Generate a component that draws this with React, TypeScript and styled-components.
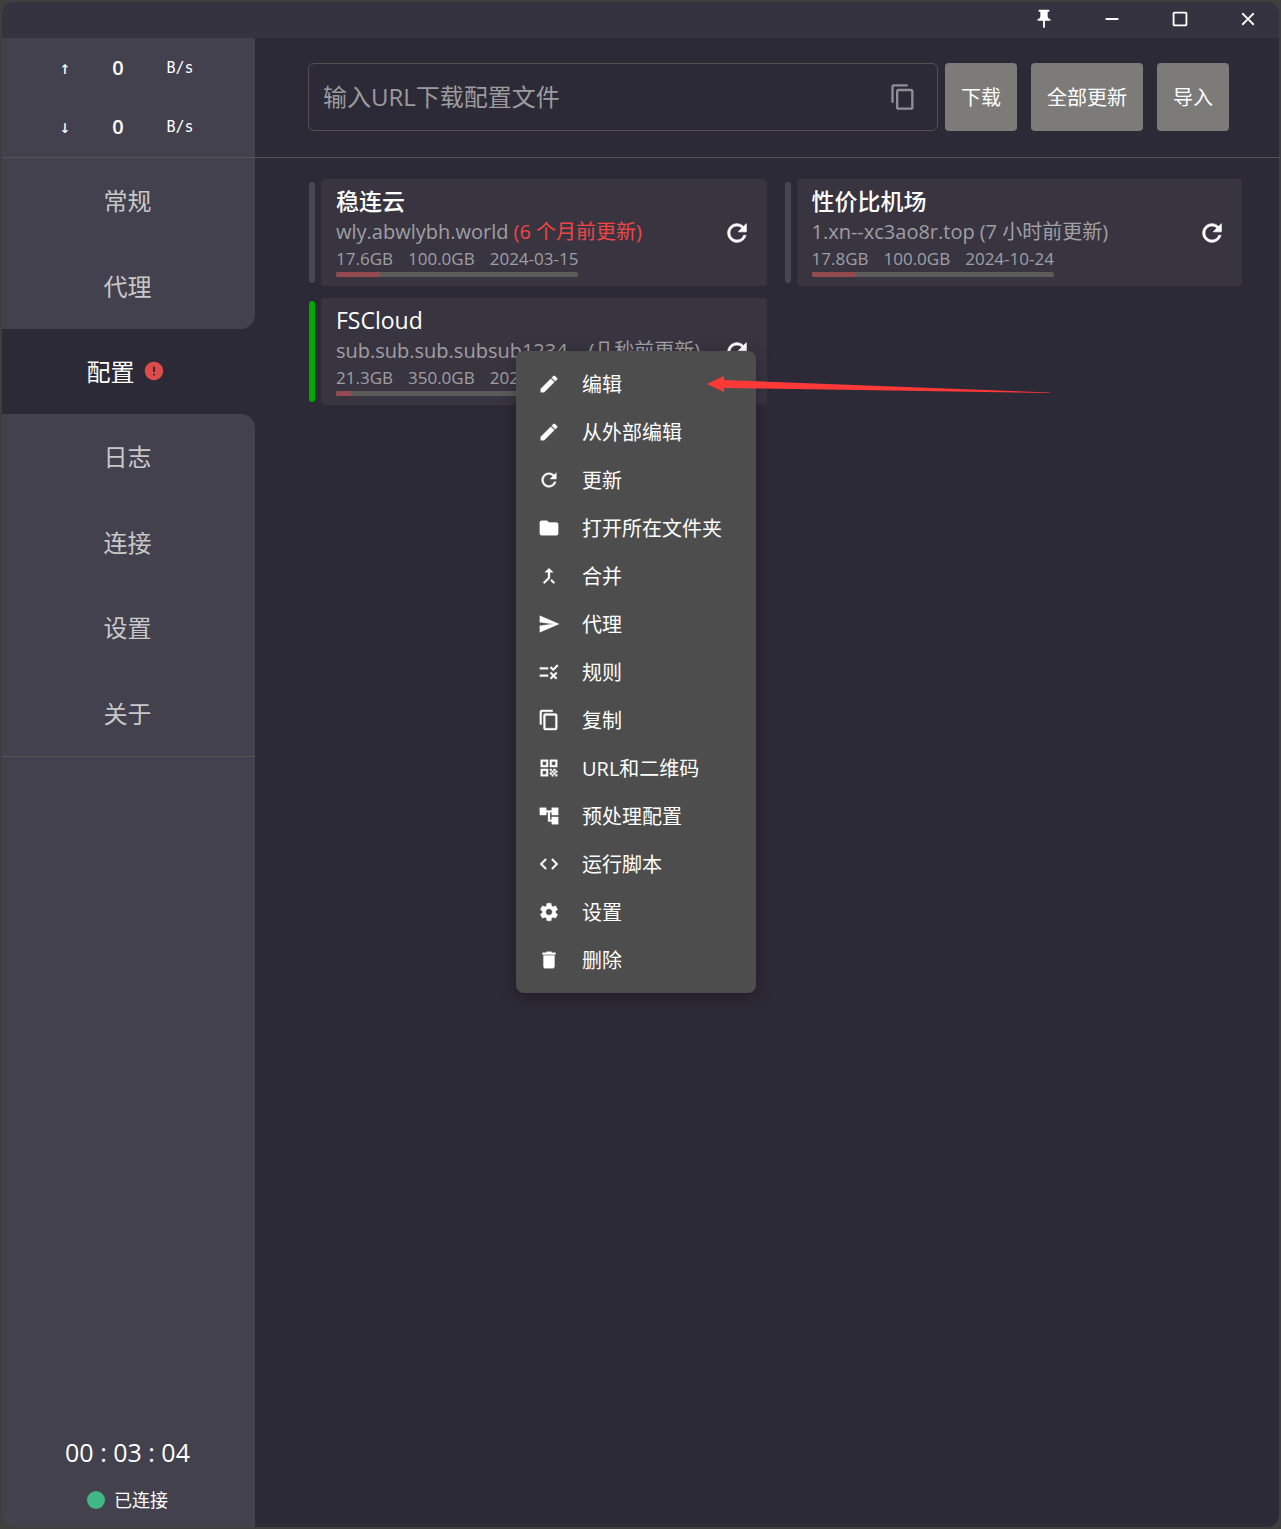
import React, { useState } from "react";
import styled, { createGlobalStyle } from "styled-components";
import type { IconType } from "react-icons";
import {
  MdAccountTree,
  MdCallMerge,
  MdClose,
  MdCode,
  MdContentCopy,
  MdCropSquare,
  MdDelete,
  MdEdit,
  MdError,
  MdFolder,
  MdPushPin,
  MdQrCode,
  MdRefresh,
  MdRemove,
  MdRule,
  MdSend,
  MdSettings,
} from "react-icons/md";

const GlobalStyle = createGlobalStyle`
  * { box-sizing: border-box; }
  body {
    margin: 0;
    background: #3f3f3e;
    color: #fff;
    font-family: "Open Sans", "Noto Sans CJK SC", sans-serif;
  }
  button, input { font: inherit; color: inherit; }
  button { border: 0; padding: 0; background: none; cursor: pointer; }
  a { color: inherit; text-decoration: none; }
`;

const Screen = styled.div`
  position: relative;
  min-height: 100vh;
  padding: 2px;
  display: flex;
`;

const Window = styled.div`
  flex: 1;
  min-width: 0;
  display: flex;
  flex-direction: column;
  border-radius: 12px;
  overflow: hidden;
  background: #2d2a37;
`;

const TitleBar = styled.header`
  display: flex;
  justify-content: flex-end;
  gap: 6px;
  height: 36px;
  background: #363341;
`;

const WindowButton = styled.button`
  display: flex;
  align-items: center;
  justify-content: center;
  width: 62px;
  height: 33px;
`;

const Body = styled.div`
  flex: 1;
  display: flex;
`;

const Sidebar = styled.aside`
  flex: none;
  width: 253px;
  display: flex;
  flex-direction: column;
`;

const Traffic = styled.div`
  height: 120px;
  background: #43414d;
  border-bottom: 1px solid #565454;
`;

const TrafficRow = styled.div`
  display: grid;
  grid-template-columns: 52px 54px 70px;
  justify-content: center;
  align-items: center;
  justify-items: center;
  height: 59px;
  padding-right: 3px;
  font-size: 20px;
  font-weight: 600;
`;

const Mono = styled.span<{ $size: number }>`
  font-family: "DejaVu Sans Mono", monospace;
  font-size: ${(p) => p.$size}px;
  font-weight: 400;
`;

const Nav = styled.nav`
  display: grid;
  grid-template-rows: repeat(7, 1fr);
  height: 598px;
  background: #2d2a37;
`;

const NavLink = styled.a<{ $active?: boolean; $edge?: "above" | "below" }>`
  display: flex;
  align-items: center;
  justify-content: center;
  gap: 8px;
  padding: 0 2px 2px 0;
  font-size: 24px;
  color: ${(p) => (p.$active ? "#fff" : "#c9c8c9")};
  background: ${(p) => (p.$active ? "#2d2a37" : "#43414d")};
  border-bottom-right-radius: ${(p) => (p.$edge === "above" ? "14px" : "0")};
  border-top-right-radius: ${(p) => (p.$edge === "below" ? "14px" : "0")};
  svg {
    margin-right: 4px;
    color: #dd4b4b;
  }
`;

const Status = styled.div`
  flex: 1;
  display: flex;
  flex-direction: column;
  align-items: center;
  justify-content: flex-end;
  gap: 18px;
  padding: 0 2px 13px 0;
  background: #43414d;
  border-top: 1px solid #565454;
`;

const Clock = styled.time`
  font-size: 25px;
  line-height: 32px;
`;

const Connection = styled.div`
  display: flex;
  align-items: center;
  gap: 9px;
  font-size: 18px;
  line-height: 28px;
`;

const Dot = styled.span`
  width: 18px;
  height: 18px;
  border-radius: 50%;
  background: #41b883;
`;

const Main = styled.main`
  flex: 1;
  min-width: 0;
`;

const Toolbar = styled.form`
  display: flex;
  align-items: center;
  gap: 14px;
  height: 120px;
  padding: 0 50px 2px 53px;
  border-bottom: 1px solid #565454;
`;

const UrlBox = styled.label`
  flex: 1;
  min-width: 0;
  display: flex;
  align-items: center;
  height: 68px;
  margin-right: -7px;
  padding: 0 20px 0 14px;
  border: 1px solid #55504f;
  border-radius: 6px;
`;

const UrlInput = styled.input`
  flex: 1;
  min-width: 0;
  padding: 0;
  border: 0;
  outline: 0;
  background: none;
  font-size: 24px;
  &::placeholder { color: #9c9b9d; opacity: 1; }
`;

const CopyButton = styled.button`
  display: flex;
  color: #8f8e99;
`;

const ActionButton = styled.button`
  height: 68px;
  padding: 0 16px;
  border-radius: 4px;
  background: #7c7b78;
  font-size: 20px;
  white-space: nowrap;
`;

const Profiles = styled.section`
  display: grid;
  grid-template-columns: 1fr 1fr;
  gap: 12px 18px;
  padding: 21px 37px 21px 54px;
`;

const Profile = styled.article`
  display: flex;
  align-items: center;
  gap: 6px;
  height: 107px;
  min-width: 0;
`;

const Marker = styled.span<{ $selected?: boolean }>`
  width: 6px;
  height: 101px;
  border-radius: 3px;
  background: ${(p) => (p.$selected ? "#00a800" : "#484652")};
`;

const Card = styled.div`
  flex: 1;
  min-width: 0;
  height: 100%;
  display: flex;
  align-items: center;
  justify-content: space-between;
  padding: 0 16px 0 15px;
  border-radius: 4px;
  background: #383541;
`;

const CardText = styled.div`
  display: flex;
  flex-direction: column;
  align-items: flex-start;
  padding-bottom: 3px;
  white-space: nowrap;
`;

const Name = styled.h2`
  margin: 0;
  font-size: 23px;
  font-weight: 500;
  line-height: 32px;
`;

const Source = styled.div`
  display: flex;
  gap: 5px;
  font-size: 20px;
  line-height: 30px;
  color: #a09fa3;
`;

const Age = styled.span<{ $stale?: boolean }>`
  color: ${(p) => (p.$stale ? "#f04545" : "inherit")};
`;

const Usage = styled.div`
  display: flex;
  gap: 15px;
  font-size: 17px;
  line-height: 24px;
  color: #a09fa3;
`;

const Meter = styled.div`
  height: 5px;
  margin-top: 1px;
  border-radius: 2px;
  overflow: hidden;
  background: #5b5b5a;
`;

const MeterFill = styled.div`
  height: 100%;
  background: #944a50;
`;

const Quota = styled.div`
  display: flex;
  flex-direction: column;
`;

const RefreshButton = styled.button`
  display: flex;
  path:not([fill="none"]) { stroke: currentColor; stroke-width: 0.6; }
`;

const Menu = styled.ul`
  position: absolute;
  left: 516px;
  top: 351px;
  width: 240px;
  margin: 0;
  padding: 9px 0;
  list-style: none;
  border-radius: 8px;
  background: #4d4d4d;
  box-shadow: 0 4px 16px rgba(0, 0, 0, 0.3);
`;

const MenuButton = styled.button`
  display: flex;
  align-items: center;
  gap: 22px;
  width: 100%;
  height: 48px;
  padding: 0 22px;
  path:not([fill="none"]) { stroke: currentColor; stroke-width: 0.4; }
`;

const MenuLabel = styled.span`
  padding-bottom: 2px;
  font-size: 20px;
  white-space: nowrap;
`;

const Pointer = styled.svg`
  position: absolute;
  left: 707px;
  top: 376px;
  pointer-events: none;
`;

const navItems = ["常规", "代理", "配置", "日志", "连接", "设置", "关于"];

const profiles = [
  { name: "稳连云", host: "wly.abwlybh.world", age: "(6 个月前更新)", stale: true, used: 17.6, total: 100, expires: "2024-03-15" },
  { name: "性价比机场", host: "1.xn--xc3ao8r.top", age: "(7 小时前更新)", used: 17.8, total: 100, expires: "2024-10-24" },
  { name: "FSCloud", host: "sub.sub.sub.subsub1234...", age: "(几秒前更新)", used: 21.3, total: 350, expires: "2024-10-24", selected: true },
];

const menuItems: [IconType, string][] = [
  [MdEdit, "编辑"],
  [MdEdit, "从外部编辑"],
  [MdRefresh, "更新"],
  [MdFolder, "打开所在文件夹"],
  [MdCallMerge, "合并"],
  [MdSend, "代理"],
  [MdRule, "规则"],
  [MdContentCopy, "复制"],
  [MdQrCode, "URL和二维码"],
  [MdAccountTree, "预处理配置"],
  [MdCode, "运行脚本"],
  [MdSettings, "设置"],
  [MdDelete, "删除"],
];

export default function App() {
  const [active, setActive] = useState(2);
  const [url, setUrl] = useState("");

  return (
    <>
      <GlobalStyle />
      <Screen>
        <Window>
          <TitleBar>
            <WindowButton aria-label="置顶"><MdPushPin size={22} /></WindowButton>
            <WindowButton aria-label="最小化"><MdRemove size={22} /></WindowButton>
            <WindowButton aria-label="最大化"><MdCropSquare size={22} /></WindowButton>
            <WindowButton aria-label="关闭"><MdClose size={22} /></WindowButton>
          </TitleBar>
          <Body>
            <Sidebar>
              <Traffic>
                {["↑", "↓"].map((arrow) => (
                  <TrafficRow key={arrow}>
                    <Mono $size={18}>{arrow}</Mono>
                    <span>0</span>
                    <Mono $size={15}>B/s</Mono>
                  </TrafficRow>
                ))}
              </Traffic>
              <Nav>
                {navItems.map((label, i) => (
                  <NavLink
                    key={label}
                    href={`#${i}`}
                    $active={i === active}
                    $edge={i === active - 1 ? "above" : i === active + 1 ? "below" : undefined}
                    onClick={() => setActive(i)}
                  >
                    {label}
                    {i === 2 && <MdError size={22} />}
                  </NavLink>
                ))}
              </Nav>
              <Status>
                <Clock>00 : 03 : 04</Clock>
                <Connection><Dot />已连接</Connection>
              </Status>
            </Sidebar>
            <Main>
              <Toolbar onSubmit={(e) => e.preventDefault()}>
                <UrlBox>
                  <UrlInput
                    aria-label="URL"
                    placeholder="输入URL下载配置文件"
                    value={url}
                    onChange={(e) => setUrl(e.target.value)}
                  />
                  <CopyButton type="button" aria-label="粘贴"><MdContentCopy size={28} /></CopyButton>
                </UrlBox>
                <ActionButton type="submit">下载</ActionButton>
                <ActionButton type="button">全部更新</ActionButton>
                <ActionButton type="button">导入</ActionButton>
              </Toolbar>
              <Profiles>
                {profiles.map((p) => (
                  <Profile key={p.name}>
                    <Marker $selected={p.selected} />
                    <Card>
                      <CardText>
                        <Name>{p.name}</Name>
                        <Source>
                          <span>{p.host}</span>
                          <Age $stale={p.stale}>{p.age}</Age>
                        </Source>
                        <Quota>
                          <Usage>
                            <span>{p.used.toFixed(1)}GB</span>
                            <span>{p.total.toFixed(1)}GB</span>
                            <span>{p.expires}</span>
                          </Usage>
                          <Meter><MeterFill style={{ width: `${(p.used / p.total) * 100}%` }} /></Meter>
                        </Quota>
                      </CardText>
                      <RefreshButton aria-label="更新"><MdRefresh size={28} /></RefreshButton>
                    </Card>
                  </Profile>
                ))}
              </Profiles>
            </Main>
          </Body>
        </Window>
        <Menu>
          {menuItems.map(([Icon, label]) => (
            <li key={label}>
              <MenuButton><Icon size={22} /><MenuLabel>{label}</MenuLabel></MenuButton>
            </li>
          ))}
        </Menu>
        <Pointer width="344" height="18" viewBox="0 0 344 18" aria-hidden="true">
          <path d="M0 8 17 0V4L343 16.5V17L17 12V16Z" fill="#ff3838" />
        </Pointer>
      </Screen>
    </>
  );
}
